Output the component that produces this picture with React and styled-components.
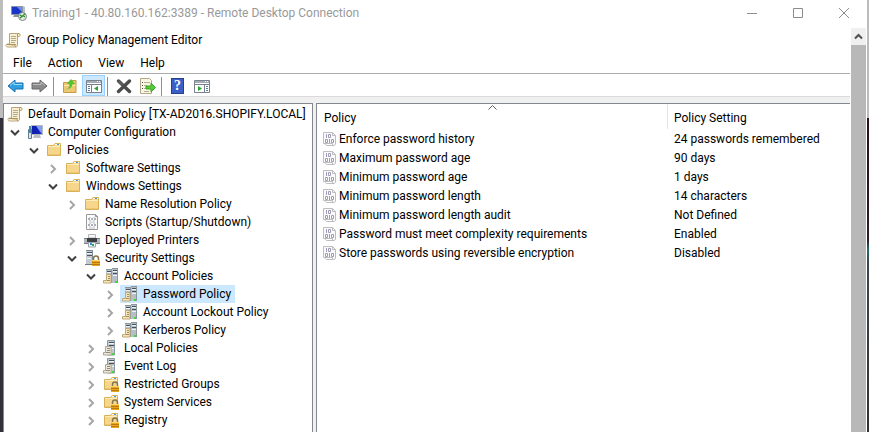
import React from "react";
import styled, { createGlobalStyle, css } from "styled-components";

const GlobalStyle = createGlobalStyle`
  * { box-sizing: border-box; }
  body {
    margin: 0;
    overflow: hidden;
    background: #ffffff;
    color: #000000;
    font-family: Roboto, "Noto Sans", sans-serif;
    font-size: 12px;
    line-height: 18px;
  }
  button { font: inherit; color: inherit; border: 0; padding: 0; margin: 0; background: none; }
`;

/* ---------- layout ---------- */

const Desktop = styled.div`
  display: flex;
  height: 100vh;
  padding: 0 2px 0 3px;
  background:
    linear-gradient(#bdbdbd 118px, #34303a 118px) left / 3px 100% no-repeat,
    linear-gradient(#bcbcbc 118px, #2b0f1c 118px, #2c1b28 240px, #1f6f6a 250px, #3a4650 262px, #33302f 100%) right / 2px 100% no-repeat;
`;

const RemoteWindow = styled.main`
  flex: 1;
  min-width: 0;
  display: flex;
  flex-direction: column;
  background: #ffffff;
`;

const TitleBar = styled.header`
  display: flex;
  align-items: center;
  flex: none;
  height: 28px;
  padding: 0 0 2px 8px;
  color: #999999;
`;

const WindowTitle = styled.h1`
  flex: 1;
  margin: 0 0 0 5px;
  font-size: 12px;
  font-weight: 400;
  white-space: nowrap;
`;

const CaptionButton = styled.button`
  display: grid;
  place-items: center;
  width: 46px;
  height: 24px;
`;

const Session = styled.div`
  flex: 1;
  display: flex;
  min-height: 0;
`;

const Console = styled.section`
  flex: 1;
  min-width: 0;
  display: flex;
  flex-direction: column;
`;

const ConsoleTitle = styled.h2`
  display: flex;
  align-items: center;
  flex: none;
  gap: 6px;
  height: 24px;
  margin: 0;
  padding-left: 2px;
  font-size: 12px;
  font-weight: 400;
`;

const MenuBar = styled.nav`
  display: flex;
  align-items: center;
  flex: none;
  gap: 16px;
  height: 22px;
  padding-left: 10px;
  border-bottom: 1px solid #acacac;
`;

const MenuItem = styled.button`
  height: 20px;
`;

const Toolbar = styled.div`
  display: flex;
  align-items: flex-end;
  flex: none;
  gap: 1px;
  height: 23px;
  padding-left: 1px;
  border-bottom: 1px solid #dadada;
`;

const ToolButton = styled.button`
  display: grid;
  place-items: center;
  width: 23px;
  height: 21px;
  ${({ $active }) => $active && css`
    background: #cce8ff;
    border: 1px solid #99d1ff;
  `}
`;

const Separator = styled.span`
  width: 1px;
  height: 19px;
  margin: 0 3px 0 1px;
  background: #8f8f8f;
`;

const Panes = styled.div`
  flex: 1;
  display: flex;
  gap: 3px;
  min-height: 0;
  padding-top: 6px;
  background: #f0f0f0;
`;

const TreePane = styled.div`
  flex: 0 0 310px;
  overflow: hidden;
  border: solid #828790;
  border-width: 1px 1px 0 1px;
  padding-top: 1px;
  background: #ffffff;
`;

const ListPane = styled.div`
  flex: 1;
  min-width: 0;
  border: solid #828790;
  border-width: 1px 0 0 1px;
  background: #ffffff;
  overflow: hidden;
`;

const ScrollTrack = styled.div`
  flex: none;
  display: flex;
  flex-direction: column;
  width: 17px;
  padding: 0 1px;
  background: linear-gradient(#f0f0f0, #f0f0f0) center / 15px 100% no-repeat;
`;

const ScrollUp = styled.button`
  display: grid;
  place-items: center;
  flex: none;
  height: 17px;
`;

const ScrollThumb = styled.div`
  flex: 1;
  background: #b8b8b8;
`;

/* ---------- tree ---------- */

const Branch = styled.ul`
  list-style: none;
  margin: 0;
  padding: 0 0 0 ${({ $indent }) => ($indent ? 19 : 0)}px;
`;

const TreeRow = styled.div`
  display: flex;
  gap: 2px;
  height: 18px;
  padding-left: ${({ $root }) => ($root ? 1 : 3)}px;
`;

const Expander = styled.button`
  display: grid;
  place-items: center;
  flex: none;
  width: 16px;
  height: 18px;
`;

const Entry = styled.button`
  display: flex;
  align-items: center;
  gap: 5px;
  height: 18px;
  padding: 0 4px 0 2px;
  white-space: nowrap;
  background: ${({ $selected }) => ($selected ? "#cce8ff" : "transparent")};
`;

/* ---------- list ---------- */

const PolicyTable = styled.table`
  width: 100%;
  table-layout: fixed;
  border-collapse: separate;
  border-spacing: 0;
  text-align: left;
`;

const HeaderCell = styled.th`
  position: relative;
  width: ${({ $main }) => ($main ? "351px" : "auto")};
  height: 25px;
  padding: 2px 0 0 ${({ $main }) => ($main ? 7 : 6)}px;
  font-weight: 400;
  border-right: ${({ $main }) => ($main ? "1px solid #e5e5e5" : "0")};
`;

const SortMark = styled.svg`
  position: absolute;
  top: 1px;
  left: calc(50% - 4px);
`;

const Cell = styled.td`
  height: 19px;
  padding: 0 0 0 6px;
  white-space: nowrap;
`;

const PolicyName = styled.div`
  display: flex;
  align-items: center;
  gap: 2px;
`;

/* ---------- icons ---------- */

const IconFrame = styled.svg`
  display: block;
  flex: none;
`;

const Svg = ({ children, w = 16, h = 16 }) => (
  <IconFrame width={w} height={h} viewBox={`0 0 ${w} ${h}`} fill="none" aria-hidden="true">
    {children}
  </IconFrame>
);

const ScrollIcon = () => (
  <Svg>
    <path d="M4.5 1.5H14c1.500 0 1.500 3 0 3h-1.500V13c0 1.500-.8 2-2 2h-8c-2 0-2-3 0-3h2z" fill="#f8efd2" stroke="#b8a679" />
    <path d="M2 12.500h8.500c-.8 0-.8 2.500.5 2.500" stroke="#a89263" fill="#e2cf9b" />
    <path d="M12.500 4.500v-2c0-.8.7-1 1.500-1" stroke="#a89263" />
    <path d="M6 4.500h5M6 6.500h5M6 8.500h5M6 10.500h4" stroke="#b3a98c" />
  </Svg>
);

const RemoteIcon = () => (
  <Svg>
    <path d="M.5 1.500h11v8H.5z" fill="#1736c8" stroke="#8b93a0" />
    <path d="M6 2h5v5z" fill="#6d8df2" />
    <path d="M12 1l2 1v6h-2z" fill="#b9bfc6" />
    <path d="M3 10h5v2H2z" fill="#8b93a0" />
    <circle cx="11.500" cy="11.500" r="4" fill="#e4e8e2" stroke="#7f887e" />
    <path d="M9 10l2 1.500L9 13M14 9l-2 1.500 2 1.500" stroke="#22912b" strokeWidth="1.300" />
  </Svg>
);

const ComputerIcon = () => (
  <Svg>
    <path d="M4.500 1.500h11v9h-11z" fill="#1c35d4" stroke="#b3b8bf" />
    <path d="M9 2h6v8z" fill="#7f9ff5" />
    <path d="M5 2h4l4 8H5z" fill="#1020b0" />
    <path d="M7 11h6l1 3H6z" fill="#b9bec6" />
    <path d="M1.500 5.500h3v9h-3z" fill="#dce4ea" stroke="#5f7c93" />
    <path d="M3 2v7" stroke="#4d88a8" strokeWidth="2" />
  </Svg>
);

const Folder = () => (
  <>
    <path d="M1.500 3.500h6l1.500-2h5.500v12h-13z" fill="#f6d68a" stroke="#d8b056" />
    <path d="M9 2.500h5" stroke="#ffffff" />
    <path d="M11 2.500h2" stroke="#3d9be0" />
    <path d="M2 4.500h12" stroke="#ffecba" />
    <path d="M2 12h12v1H2z" fill="#ecc672" />
  </>
);

const FolderIcon = () => <Svg><Folder /></Svg>;

const Padlock = () => (
  <>
    <path d="M9.500 10.500v-2a2.500 2.500 0 0 1 5 0v2" stroke="#86764c" strokeWidth="1.500" />
    <path d="M8 10h8v6H8z" fill="#e7a61c" />
    <path d="M8 12.500h8M8 14.500h8" stroke="#b87a10" />
    <path d="M8 10.500h8" stroke="#ffd66b" />
  </>
);

const LockedFolderIcon = () => <Svg><Folder /><Padlock /></Svg>;

const ScriptIcon = () => (
  <Svg>
    <path d="M2.500.5h9l2 2v13h-11z" fill="#fbfbfb" stroke="#9a9a9a" />
    <path d="M11.500.5v2h2" stroke="#8f8f8f" />
    <path d="M6 3.500L4.500 5 6 6.500M10 3.500L11.500 5 10 6.500M6 9.500L4.500 11 6 12.500M10 9.500l1.500 1.500-1.500 1.500M7 5h2M7 11h2" stroke="#5d6573" />
    <path d="M5 8h6M5 14h6" stroke="#c2c2c2" />
  </Svg>
);

const PrinterIcon = () => (
  <Svg>
    <path d="M4.500 2.500h7V6h-7z" fill="#f6f6f6" stroke="#b5b5b5" />
    <path d="M0 6h16v6H0z" fill="#b3b7bb" />
    <path d="M0 6.500h16M0 11.500h16" stroke="#7d8187" />
    <path d="M3 6h10v4H3z" fill="#3b3e43" />
    <path d="M4.500 10.500h7V15h-7z" fill="#f2f7fb" stroke="#9aa4ad" />
    <path d="M6 11h2v2H6z" fill="#2f8fe0" />
    <path d="M8 12h2v2H8z" fill="#39a858" />
  </Svg>
);

const SecurityIcon = () => (
  <Svg>
    <path d="M2 0h7v15H2z" fill="#c3cacf" />
    <path d="M2 .5h7M8.500 0v15" stroke="#7f8b94" />
    <path d="M3 2.500h5M3 5.500h5" stroke="#49555f" />
    <path d="M3 3.500h5M3 8.500h4" stroke="#f2f5f7" />
    <path d="M1 14h8v1H1z" fill="#6f7a82" />
    <Padlock />
  </Svg>
);

const ServersIcon = () => (
  <Svg>
    <path d="M3 1h6v13H3zM9 0h6v15H9z" fill="#b5bfc5" />
    <path d="M3 1.500h6M9 .5h6" stroke="#8b979f" />
    <path d="M4 3.500h4M10 2.500h4M10 5.500h4" stroke="#46525b" />
    <path d="M4 4.500h4M10 3.500h4M10 7.500h4" stroke="#eef3f5" />
    <path d="M8.500 1v14M14.500 1v14" stroke="#8b979f" />
    <path d="M3.500 6.500H8v8.500H.5v-2.500h3z" fill="#f6e6b9" stroke="#bfa979" />
    <path d="M5 8.500h2M5 10.500h2M4 12.500h3" stroke="#a08c5e" />
    <path d="M12 13h2v2h-2z" fill="#37e02a" />
  </Svg>
);

const ServerIcon = () => (
  <Svg>
    <path d="M4.500.5h7v14.500h-7z" fill="#c0c8cd" stroke="#8d98a1" />
    <path d="M6 2.500h5M6 5.500h5" stroke="#46525b" />
    <path d="M6 3.500h5M9 8.500h2" stroke="#f1f5f7" />
    <path d="M2.500 6.500H8v8.500H.5v-2.500h2z" fill="#ece7d9" stroke="#ada794" />
    <path d="M4 8.500h3M4 10.500h3M3 12.500h4" stroke="#8f8a79" />
    <path d="M9 13h2v2H9z" fill="#37e02a" />
  </Svg>
);

const PolicyIcon = () => (
  <Svg w={14}>
    <path d="M.5 1.500h9l3 3V13c0 1-1 1.500-2 1.500h-1v-2h-9z" fill="#fafafa" stroke="#bdbdbd" />
    <path d="M9.500 1.500v3h3M2 12.500c0 1 1 2 2 2h7" stroke="#bdbdbd" />
    <path d="M3.500 3v4M6.500 8v4" stroke="#a09cb8" />
    <path d="M5.500 3.500h2v3h-2zM2.500 8.500h2v3h-2zM8.500 8.500h2v3h-2z" stroke="#a09cb8" />
  </Svg>
);

const Arrow = ({ flip, fill, shine, edge }) => (
  <Svg w={17}>
    <g transform={flip ? "matrix(-1 0 0 1 17 0)" : undefined}>
      <path d="M1 8l7-6v3h8v6H8v3z" fill={fill} stroke={edge} strokeLinejoin="round" />
      <path d="M3 7.500L7 4v2.500h8" stroke={shine} />
    </g>
  </Svg>
);

const UpFolderIcon = () => (
  <Svg>
    <path d="M1.500 4.500h5l1.500-2h6v12h-12.500z" fill="#edc873" stroke="#c69a45" />
    <path d="M2 7.500h11.500" stroke="#fce6ac" />
    <path d="M2.500 11.500c4 0 5-3 5-5.500H5l4-5 4 5h-2.500c0 3-3 5.500-8 5.500z" fill="#4ec62f" />
  </Svg>
);

const PaneIcon = ({ right }) => (
  <Svg>
    <path d="M.5 2.500h15v12H.5z" fill="#ffffff" stroke="#79828c" />
    <path d="M1 3h14v2H1z" fill="#a4adb6" />
    <path d="M11 3.500h1M13 3.500h1" stroke="#ffffff" />
    <path d="M.5 6.500h15" stroke="#79828c" />
    {right ? (
      <>
        <path d="M10.500 7v7" stroke="#79828c" />
        <path d="M12 8.500h2M12 10.500h2M12 12.500h2" stroke="#5a7fa8" />
        <path d="M4 8v5l4-2.500z" fill="#28a428" />
      </>
    ) : (
      <>
        <path d="M5.500 7v7" stroke="#79828c" />
        <path d="M2 8.500h2M2 10.500h2M2 12.500h2" stroke="#5a7fa8" />
        <path d="M12 8v5l-4-2.500z" fill="#28a428" />
      </>
    )}
  </Svg>
);

const DeleteIcon = () => (
  <Svg>
    <path d="M2.500 3l11 10.500M13.500 3l-11 10.500" stroke="#4c4c4c" strokeWidth="3.500" strokeLinecap="round" />
    <path d="M2.500 3l4 4" stroke="#7b7b7b" />
  </Svg>
);

const ExportIcon = () => (
  <Svg>
    <path d="M.5.5h9l2 2v13H.5z" fill="#fbf6e2" stroke="#b0a888" />
    <path d="M2 4.500h1M2 7.500h1M2 10.500h1" stroke="#4a4a4a" />
    <path d="M4 4.500h6M4 7.500h3M4 10.500h3M4 13.500h5" stroke="#b6ae92" />
    <path d="M6 8h5V5l4.500 4.500L11 14v-3H6z" fill="#55cc38" stroke="#3ba524" />
  </Svg>
);

const QuestionTile = styled.span`
  display: grid;
  place-items: center;
  width: 13px;
  height: 16px;
  color: #ffffff;
  background: #3b5fc4;
  border: 1px solid #24408f;
  font: 700 14px/14px "Liberation Serif", serif;
`;

const Chevron = ({ open }) => (
  <Svg w={12} h={12}>
    {open ? (
      <path d="M2 4.500l4 4 4-4" stroke="#404040" strokeWidth="2" />
    ) : (
      <path d="M4 3l4 4-4 4" stroke="#a6a6a6" strokeWidth="2" />
    )}
  </Svg>
);

/* ---------- data ---------- */

const tree = {
  label: "Default Domain Policy [TX-AD2016.SHOPIFY.LOCAL]", Icon: ScrollIcon, children: [
    { label: "Computer Configuration", Icon: ComputerIcon, children: [
      { label: "Policies", Icon: FolderIcon, children: [
        { label: "Software Settings", Icon: FolderIcon },
        { label: "Windows Settings", Icon: FolderIcon, children: [
          { label: "Name Resolution Policy", Icon: FolderIcon },
          { label: "Scripts (Startup/Shutdown)", Icon: ScriptIcon, leaf: true },
          { label: "Deployed Printers", Icon: PrinterIcon },
          { label: "Security Settings", Icon: SecurityIcon, children: [
            { label: "Account Policies", Icon: ServersIcon, children: [
              { label: "Password Policy", Icon: ServersIcon, selected: true },
              { label: "Account Lockout Policy", Icon: ServersIcon },
              { label: "Kerberos Policy", Icon: ServersIcon },
            ] },
            { label: "Local Policies", Icon: ServerIcon },
            { label: "Event Log", Icon: ServerIcon },
            { label: "Restricted Groups", Icon: LockedFolderIcon },
            { label: "System Services", Icon: LockedFolderIcon },
            { label: "Registry", Icon: LockedFolderIcon },
          ] },
        ] },
      ] },
    ] },
  ],
};

const policies = [
  ["Enforce password history", "24 passwords remembered"],
  ["Maximum password age", "90 days"],
  ["Minimum password age", "1 days"],
  ["Minimum password length", "14 characters"],
  ["Minimum password length audit", "Not Defined"],
  ["Password must meet complexity requirements", "Enabled"],
  ["Store passwords using reversible encryption", "Disabled"],
];

function TreeNode({ node, depth = 0 }) {
  const { label, Icon, children, leaf, selected } = node;
  return (
    <li>
      <TreeRow $root={depth === 0}>
        {depth > 0 && (leaf ? <Expander as="span" /> : (
          <Expander aria-label={`Toggle ${label}`} aria-expanded={!!children}>
            <Chevron open={!!children} />
          </Expander>
        ))}
        <Entry $selected={selected}><Icon />{label}</Entry>
      </TreeRow>
      {children && (
        <Branch $indent={depth > 0}>
          {children.map((child) => <TreeNode key={child.label} node={child} depth={depth + 1} />)}
        </Branch>
      )}
    </li>
  );
}

export default function App() {
  return (
    <>
      <GlobalStyle />
      <Desktop>
        <RemoteWindow>
          <TitleBar>
            <RemoteIcon />
            <WindowTitle>Training1 - 40.80.160.162:3389 - Remote Desktop Connection</WindowTitle>
            <CaptionButton aria-label="Minimize"><Svg w={10} h={10}><path d="M0 5.500h10" stroke="#8c8c8c" /></Svg></CaptionButton>
            <CaptionButton aria-label="Maximize"><Svg w={10} h={10}><path d="M.5.5h9v9h-9z" stroke="#8c8c8c" /></Svg></CaptionButton>
            <CaptionButton aria-label="Close"><Svg w={10} h={10}><path d="M0 0l10 10M10 0L0 10" stroke="#8c8c8c" /></Svg></CaptionButton>
          </TitleBar>
          <Session>
            <Console>
              <ConsoleTitle><ScrollIcon />Group Policy Management Editor</ConsoleTitle>
              <MenuBar>
                {["File", "Action", "View", "Help"].map((name) => <MenuItem key={name}>{name}</MenuItem>)}
              </MenuBar>
              <Toolbar role="toolbar">
                <ToolButton aria-label="Back"><Arrow fill="#2e9fe0" shine="#9bdcfb" edge="#1b6fb0" /></ToolButton>
                <ToolButton aria-label="Forward"><Arrow flip fill="#8a8a8a" shine="#bcbcbc" edge="#686868" /></ToolButton>
                <Separator />
                <ToolButton aria-label="Up one level"><UpFolderIcon /></ToolButton>
                <ToolButton aria-label="Show console tree" aria-pressed="true" $active><PaneIcon /></ToolButton>
                <Separator />
                <ToolButton aria-label="Delete"><DeleteIcon /></ToolButton>
                <ToolButton aria-label="Export list"><ExportIcon /></ToolButton>
                <Separator />
                <ToolButton aria-label="Help"><QuestionTile>?</QuestionTile></ToolButton>
                <ToolButton aria-label="Show action pane"><PaneIcon right /></ToolButton>
              </Toolbar>
              <Panes>
                <TreePane>
                  <Branch><TreeNode node={tree} /></Branch>
                </TreePane>
                <ListPane>
                  <PolicyTable>
                    <thead>
                      <tr>
                        <HeaderCell $main scope="col">
                          Policy
                          <SortMark width="9" height="5" viewBox="0 0 9 5" fill="none">
                            <path d="M.5 4.500l4-4 4 4" stroke="#5c5c5c" />
                          </SortMark>
                        </HeaderCell>
                        <HeaderCell scope="col">Policy Setting</HeaderCell>
                      </tr>
                    </thead>
                    <tbody>
                      {policies.map(([name, setting]) => (
                        <tr key={name}>
                          <Cell><PolicyName><PolicyIcon />{name}</PolicyName></Cell>
                          <Cell>{setting}</Cell>
                        </tr>
                      ))}
                    </tbody>
                  </PolicyTable>
                </ListPane>
              </Panes>
            </Console>
            <ScrollTrack>
              <ScrollUp aria-label="Scroll up">
                <Svg w={9} h={7}><path d="M1 5.500L4.500 2 8 5.500" stroke="#505050" strokeWidth="2" /></Svg>
              </ScrollUp>
              <ScrollThumb />
            </ScrollTrack>
          </Session>
        </RemoteWindow>
      </Desktop>
    </>
  );
}
